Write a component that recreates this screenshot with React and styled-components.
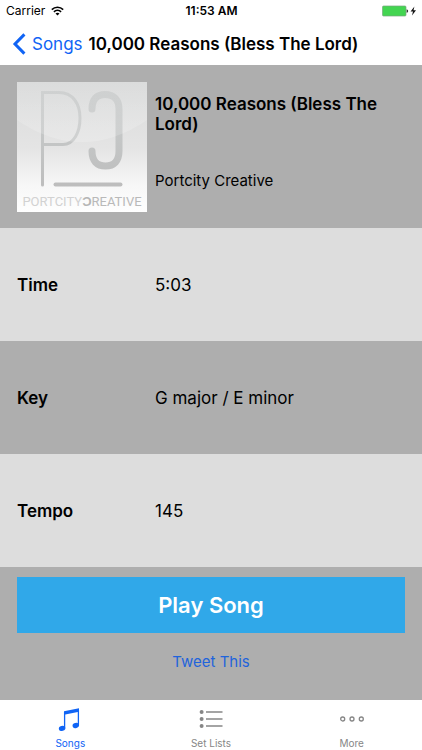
import React, { useState } from 'react'
import styled, { createGlobalStyle } from 'styled-components'

const GlobalStyle = createGlobalStyle`
* {
box-sizing:border-box;
}
body {
margin:0;
background:#ffffff;
color:#000000;
font-family:Inter, 'Liberation Sans', sans-serif;
}
h1, h2, p, dl, dt, dd {
margin:0;
}
`
const MainContainer = styled.div`
min-height:100vh;
display:flex;
flex-direction:column;
`
const StatusBar = styled.div`
height:22px;
padding:0 5px 0 6px;
display:grid;
grid-template-columns:1fr auto 1fr;
align-items:center;
font-size:12px;
line-height:16px;
`
const StatusLeft = styled.div`
display:flex;
align-items:center;
gap:6px;
`
const StatusTime = styled.div`
font-weight:600;
`
const StatusRight = styled.div`
display:flex;
justify-content:flex-end;
`
const NavBar = styled.header`
height:43px;
padding:0 12px;
display:flex;
align-items:center;
gap:6px;
`
const BackLink = styled.a`
display:flex;
align-items:center;
gap:6px;
color:#1064f5;
font-size:17px;
line-height:20px;
text-decoration:none;
`
const NavTitle = styled.h1`
font-size:17px;
line-height:20px;
font-weight:600;
white-space:nowrap;
`
const Content = styled.main`
flex:1;
display:flex;
flex-direction:column;
background:#aeaeae;
`
const SongHeader = styled.section`
padding:17px 17px 16px;
display:grid;
grid-template-columns:130px 1fr;
gap:8px;
`
const Cover = styled.svg`
display:block;
width:130px;
height:130px;
`
const SongInfo = styled.div`
padding-top:12px;
display:flex;
flex-direction:column;
gap:37px;
`
const SongTitle = styled.h2`
font-size:17px;
line-height:20px;
font-weight:600;
`
const Artist = styled.p`
font-size:15px;
line-height:20px;
`
const DetailRow = styled.div`
height:113px;
padding:0 17px;
display:grid;
grid-template-columns:130px 1fr;
gap:8px;
align-items:center;
background:${props => props.$light ? '#dddddd' : '#aeaeae'};
font-size:17px;
line-height:20px;
`
const DetailLabel = styled.dt`
font-weight:600;
`
const DetailValue = styled.dd`
font-weight:400;
`
const Actions = styled.section`
padding:10px 17px;
display:flex;
flex-direction:column;
align-items:center;
gap:19px;
`
const PlayButton = styled.button`
width:100%;
height:56px;
border:none;
background:#30a8e9;
color:#ffffff;
font-family:inherit;
font-size:22px;
font-weight:600;
`
const TweetButton = styled.button`
border:none;
padding:0;
background:none;
color:#1f64dc;
font-family:inherit;
font-size:15px;
line-height:20px;
`
const TabBar = styled.nav`
height:50px;
display:grid;
grid-template-columns:repeat(3, 1fr);
`
const Tab = styled.a`
padding-top:7px;
display:flex;
flex-direction:column;
align-items:center;
gap:4px;
color:${props => props.$active ? '#1064f5' : '#868686'};
font-size:10px;
line-height:14px;
text-decoration:none;
`

const details = [
    { label: 'Time', value: '5:03' },
    { label: 'Key', value: 'G major / E minor' },
    { label: 'Tempo', value: '145' },
]

const WifiIcon = () => (
    <svg width="13" height="10" viewBox="0 0 13 10" fill="none" stroke="#000000" strokeWidth="1.6">
        <path d="M0.8 3.6 A8.2 8.2 0 0 1 12.2 3.6" />
        <path d="M2.9 5.8 A5.2 5.2 0 0 1 10.1 5.8" />
        <path d="M6.5 9.6 L4.5 7.6 A2.9 2.9 0 0 1 8.5 7.6 Z" fill="#000000" stroke="none" />
    </svg>
)

const BatteryIcon = () => (
    <svg width="35" height="12" viewBox="0 0 35 12">
        <rect x="0.5" y="1" width="23.5" height="10" rx="1" fill="#43d551" stroke="#79a87e" strokeWidth="0.7" />
        <path d="M24.6 4.2 Q26.2 4.6 26.2 6 Q26.2 7.4 24.6 7.8 Z" fill="#333333" />
        <path d="M32.4 1.4 L28.6 6.6 H31 L30 10.6 L34 5.3 H31.5 Z" fill="#111111" />
    </svg>
)

const BackIcon = () => (
    <svg width="14" height="22" viewBox="0 0 14 22" fill="none" stroke="currentColor" strokeWidth="3">
        <path d="M12.4 1.4 L3 11 L12.4 20.6" />
    </svg>
)

const MusicIcon = () => (
    <svg width="24" height="25" viewBox="0 0 24 25" fill="currentColor">
        <path d="M6 4.2 L21 1.2 V4.8 L6 7.8 Z" />
        <path d="M6.6 5 V21.3 M20.4 3 V18.3" fill="none" stroke="currentColor" strokeWidth="1.3" />
        <ellipse cx="4.1" cy="21.4" rx="3.3" ry="2.5" transform="rotate(-18 4.1 21.4)" />
        <ellipse cx="17.8" cy="18.5" rx="3.3" ry="2.5" transform="rotate(-18 17.8 18.5)" />
    </svg>
)

const ListIcon = () => (
    <svg width="24" height="25" viewBox="0 0 24 25" fill="currentColor">
        <circle cx="2.6" cy="5" r="2" />
        <circle cx="2.6" cy="12" r="2" />
        <circle cx="2.6" cy="19" r="2" />
        <path d="M7 5 H23.5 M7 12 H23.5 M7 19 H23.5" stroke="currentColor" strokeWidth="1.6" />
    </svg>
)

const MoreIcon = () => (
    <svg width="24" height="25" viewBox="0 0 24 25" fill="none" stroke="currentColor" strokeWidth="1.3">
        <circle cx="2.7" cy="12" r="2" />
        <circle cx="12" cy="12" r="2" />
        <circle cx="21.3" cy="12" r="2" />
    </svg>
)

const tabs = [
    { name: 'Songs', Icon: MusicIcon },
    { name: 'Set Lists', Icon: ListIcon },
    { name: 'More', Icon: MoreIcon },
]

const CoverArt = () => (
    <Cover viewBox="0 0 130 130" role="img" aria-label="Portcity Creative">
        <defs>
            <linearGradient id="paper" x1="0" y1="0" x2="0" y2="1">
                <stop offset="0" stopColor="#d9dada" />
                <stop offset="0.5" stopColor="#e4e4e4" />
                <stop offset="0.8" stopColor="#f7f7f7" />
                <stop offset="1" stopColor="#fefefe" />
            </linearGradient>
            <linearGradient id="gloss" x1="0" y1="0" x2="0" y2="1">
                <stop offset="0" stopColor="#ffffff" stopOpacity="0.05" />
                <stop offset="1" stopColor="#ffffff" stopOpacity="0.2" />
            </linearGradient>
            <linearGradient id="ink" gradientUnits="userSpaceOnUse" x1="0" y1="8" x2="0" y2="106">
                <stop offset="0" stopColor="#cbcdcd" />
                <stop offset="0.5" stopColor="#c4c6c6" />
                <stop offset="1" stopColor="#bdbdbd" />
            </linearGradient>
        </defs>
        <rect width="130" height="130" fill="url(#paper)" />
        <g fill="none" stroke="url(#ink)" strokeLinecap="round">
            <path strokeWidth="3" d="M25.5 103 V10.5 H42 C56 10.5 63 22 63 36 C63 50 57 62.5 46 62.5 H26" />
            <path strokeWidth="7" d="M75 27 C75 17 80 12.5 88 12.5 C97 12.5 102 18 102 27 V69 C102 79 97 84 88.5 84 C80 84 75 79 75 69" />
            <path strokeWidth="4" stroke="#bdbdbd" d="M38.5 102.5 H103.5" />
        </g>
        <path d="M0 0 H130 V38 Q98 60 65 60 Q32 60 0 38 Z" fill="url(#gloss)" />
        <text x="65" y="124" textAnchor="middle" fontFamily="Roboto, 'Liberation Sans', sans-serif" fontSize="13" fill="#d2d2d2">
            PORTCITY<tspan fontWeight="700" fill="#b6b6b6">Ɔ</tspan><tspan fill="#b9b9b9">REATIVE</tspan>
        </text>
    </Cover>
)

function App() {

    const [activeTab, setActiveTab] = useState('Songs')

    const changeTab = (e, name) => {
        e.preventDefault()
        setActiveTab(name)
    }

    return (
        <MainContainer>
            <GlobalStyle />
            <StatusBar>
                <StatusLeft>
                    <span>Carrier</span>
                    <WifiIcon />
                </StatusLeft>
                <StatusTime>11:53 AM</StatusTime>
                <StatusRight>
                    <BatteryIcon />
                </StatusRight>
            </StatusBar>
            <NavBar>
                <BackLink href="#songs">
                    <BackIcon />
                    Songs
                </BackLink>
                <NavTitle>10,000 Reasons (Bless The Lord)</NavTitle>
            </NavBar>
            <Content>
                <SongHeader>
                    <CoverArt />
                    <SongInfo>
                        <SongTitle>10,000 Reasons (Bless The Lord)</SongTitle>
                        <Artist>Portcity Creative</Artist>
                    </SongInfo>
                </SongHeader>
                <dl>
                    {details.map((item, index) => (
                        <DetailRow key={item.label} $light={index % 2 === 0}>
                            <DetailLabel>{item.label}</DetailLabel>
                            <DetailValue>{item.value}</DetailValue>
                        </DetailRow>
                    ))}
                </dl>
                <Actions>
                    <PlayButton type="button">Play Song</PlayButton>
                    <TweetButton type="button">Tweet This</TweetButton>
                </Actions>
            </Content>
            <TabBar>
                {tabs.map(({ name, Icon }) => (
                    <Tab
                        key={name}
                        href="#"
                        $active={name === activeTab}
                        onClick={(e) => changeTab(e, name)}
                    >
                        <Icon />
                        {name}
                    </Tab>
                ))}
            </TabBar>
        </MainContainer>
    )
}

export default App
